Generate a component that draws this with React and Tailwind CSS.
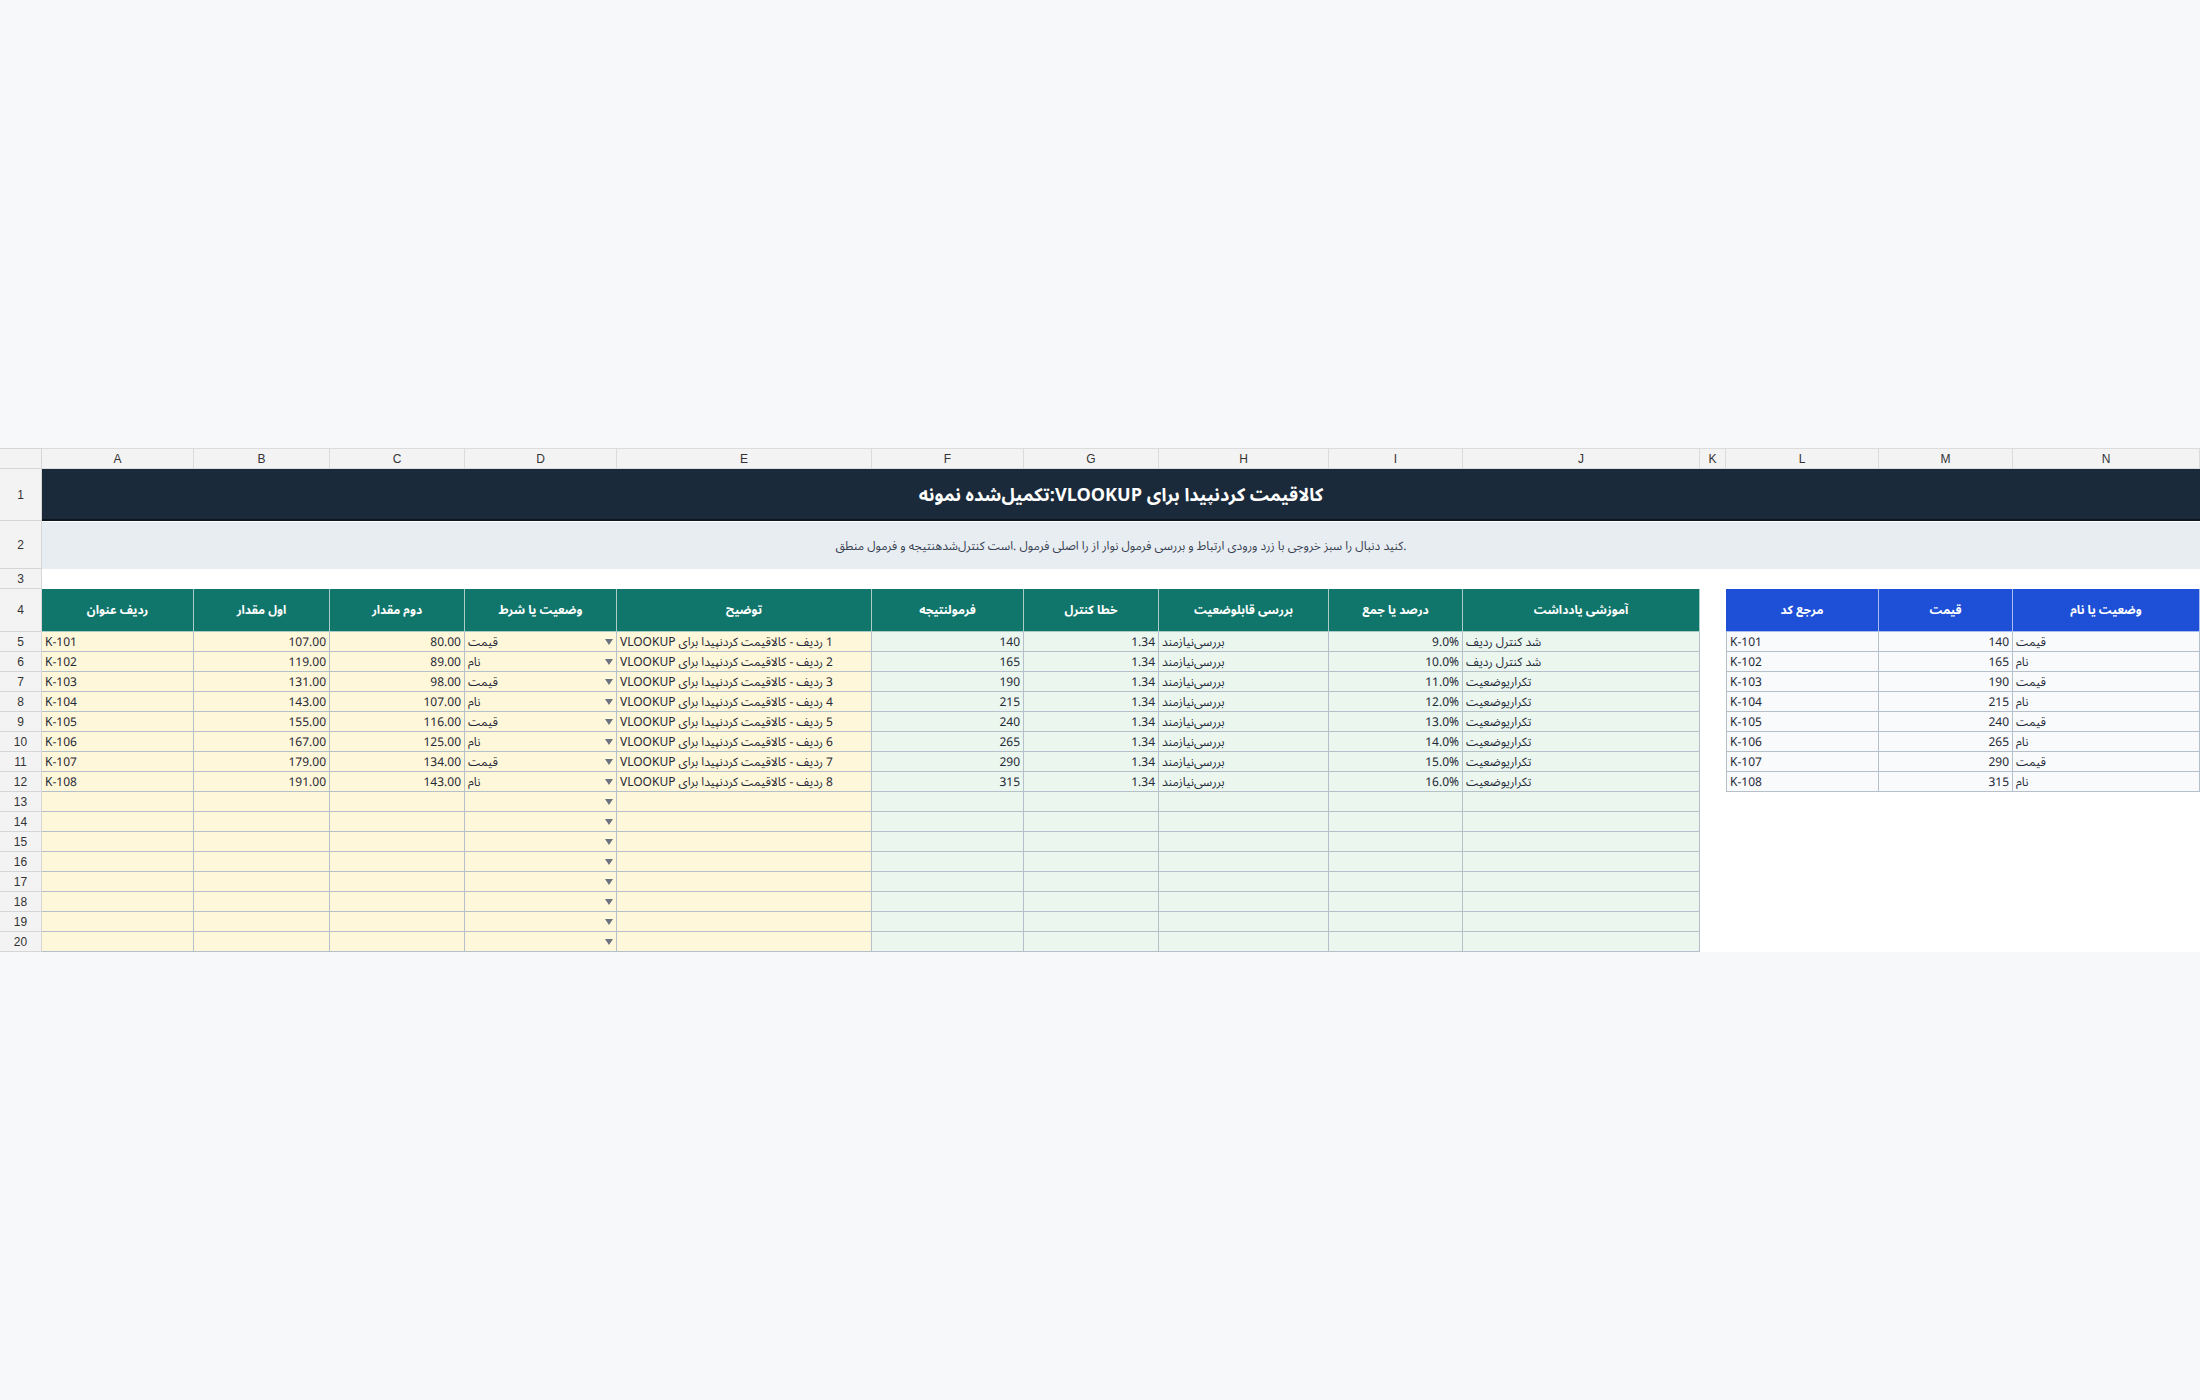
import React from "react";

const GRID =
  "grid grid-cols-[42px_152px_136px_135px_152px_255px_152px_135px_170px_134px_237px_26px_153px_134px_187px]";

const FONT = {
  fontFamily:
    '"Noto Sans Arabic UI", "Noto Sans Arabic", "Noto Naskh Arabic UI", "DejaVu Sans Condensed", "DejaVu Sans", sans-serif',
};
const ARIAL = { fontFamily: '"Liberation Sans", Arial, sans-serif' };

const letters = ["A", "B", "C", "D", "E", "F", "G", "H", "I", "J", "K", "L", "M", "N"];

const rows = [
  { a: "K-101", b: "107.00", c: "80.00", d: "قیمت", f: "140", i: "9.0%", j: "شد کنترل ردیف" },
  { a: "K-102", b: "119.00", c: "89.00", d: "نام", f: "165", i: "10.0%", j: "شد کنترل ردیف" },
  { a: "K-103", b: "131.00", c: "98.00", d: "قیمت", f: "190", i: "11.0%", j: "تکراریوضعیت" },
  { a: "K-104", b: "143.00", c: "107.00", d: "نام", f: "215", i: "12.0%", j: "تکراریوضعیت" },
  { a: "K-105", b: "155.00", c: "116.00", d: "قیمت", f: "240", i: "13.0%", j: "تکراریوضعیت" },
  { a: "K-106", b: "167.00", c: "125.00", d: "نام", f: "265", i: "14.0%", j: "تکراریوضعیت" },
  { a: "K-107", b: "179.00", c: "134.00", d: "قیمت", f: "290", i: "15.0%", j: "تکراریوضعیت" },
  { a: "K-108", b: "191.00", c: "143.00", d: "نام", f: "315", i: "16.0%", j: "تکراریوضعیت" },
];

function RowNum({ n, className = "" }) {
  return (
    <div
      style={ARIAL}
      className={`flex items-center justify-center bg-[#f3f3f3] border-r border-b border-[#d6d6d6] text-[12px] text-[#333] ${className}`}
    >
      {n}
    </div>
  );
}

function Arrow() {
  return (
    <svg width="8" height="6" viewBox="0 0 8 6" className="shrink-0">
      <polygon points="0,0 8,0 4,6" fill="#6b7280" />
    </svg>
  );
}

const Y = "bg-[#fff7d9] border-r border-b border-[#b6c0ca]";
const G = "bg-[#eaf6ee] border-r border-b border-[#b6c0ca]";
const Lk = "bg-[#f8fafc] border-r border-b border-[#b6c0ca]";

function Cell({ cls, children, align = "left", rtl = false }) {
  const j = align === "right" ? "justify-end" : "justify-start";
  return (
    <div className={`flex items-center ${j} px-[3px] overflow-hidden whitespace-nowrap text-[12px] text-[#1f2937] ${cls}`}>
      {rtl ? <span dir="rtl" className="text-left">{children}</span> : children}
    </div>
  );
}

function DCell({ children }) {
  return (
    <div className={`flex items-center justify-between pl-[3px] pr-[3px] overflow-hidden whitespace-nowrap text-[12px] text-[#1f2937] ${Y}`}>
      <span dir="rtl">{children}</span>
      <Arrow />
    </div>
  );
}

function Head({ children, blue = false }) {
  return (
    <div
      dir="rtl"
      className={`flex items-center justify-center text-[12px] font-bold text-white border-r border-b ${
        blue ? "bg-[#1d4fd7] border-[#a9bdf0]" : "bg-[#10766b] border-[#a9cdc6]"
      }`}
    >
      {children}
    </div>
  );
}

export default function App() {
  return (
    <div className="min-h-screen w-full bg-[#f6f8fa] flex items-center" style={FONT}>
      <div className="w-[2200px] bg-white">
        <div className={`${GRID} h-[21px]`}>
          <div className="bg-[#f3f3f3] border-r border-b border-t border-[#d6d6d6]" />
          {letters.map((l) => (
            <div
              key={l}
              style={ARIAL}
              className="flex items-center justify-center bg-[#f3f3f3] border-r border-b border-t border-[#dcdcdc] text-[12px] text-[#333]"
            >
              {l}
            </div>
          ))}
        </div>

        <div className={`${GRID} h-[52px]`}>
          <RowNum n="1" />
          <div
            dir="rtl"
            className="col-span-14 flex items-center justify-center bg-[#1a2a3a] border-b-2 border-[#0b1620] text-[18px] font-bold text-white"
          >
            کالاقیمت کردنپیدا برای VLOOKUP:تکمیل‌شده نمونه
          </div>
        </div>

        <div className={`${GRID} h-[48px]`}>
          <RowNum n="2" />
          <div
            dir="rtl"
            className="col-span-14 flex items-center justify-center bg-[#e8edf2] border-t border-white text-[12px] text-[#374151]"
          >
            .کنید دنبال را سبز خروجی با زرد ورودی ارتباط و بررسی فرمول نوار از را اصلی فرمول .است کنترل‌شدهنتیجه و فرمول منطق
          </div>
        </div>

        <div className={`${GRID} h-[20px]`}>
          <RowNum n="3" />
          <div className="col-span-14 bg-white" />
        </div>

        <div className={`${GRID} h-[43px]`}>
          <RowNum n="4" />
          <Head>ردیف عنوان</Head>
          <Head>اول مقدار</Head>
          <Head>دوم مقدار</Head>
          <Head>وضعیت یا شرط</Head>
          <Head>توضیح</Head>
          <Head>فرمولنتیجه</Head>
          <Head>خطا کنترل</Head>
          <Head>بررسی قابلوضعیت</Head>
          <Head>درصد یا جمع</Head>
          <Head>آموزشی یادداشت</Head>
          <div className="bg-white" />
          <Head blue>مرجع کد</Head>
          <Head blue>قیمت</Head>
          <Head blue>وضعیت یا نام</Head>
        </div>

        {rows.map((r, i) => (
          <div key={r.a} className={`${GRID} h-[20px]`}>
            <RowNum n={i + 5} />
            <Cell cls={Y}>{r.a}</Cell>
            <Cell cls={Y} align="right">{r.b}</Cell>
            <Cell cls={Y} align="right">{r.c}</Cell>
            <DCell>{r.d}</DCell>
            <Cell cls={Y} rtl>{`${i + 1} ردیف - کالاقیمت کردنپیدا برای VLOOKUP`}</Cell>
            <Cell cls={G} align="right">{r.f}</Cell>
            <Cell cls={G} align="right">1.34</Cell>
            <Cell cls={G} rtl>بررسی‌نیازمند</Cell>
            <Cell cls={G} align="right">{r.i}</Cell>
            <Cell cls={G} rtl>{r.j}</Cell>
            <div className="bg-white" />
            <Cell cls={`${Lk} border-l`}>{r.a}</Cell>
            <Cell cls={Lk} align="right">{r.f}</Cell>
            <Cell cls={Lk} rtl>{r.d}</Cell>
          </div>
        ))}

        {Array.from({ length: 8 }).map((_, i) => (
          <div key={i} className={`${GRID} h-[20px]`}>
            <RowNum n={i + 13} />
            <div className={Y} />
            <div className={Y} />
            <div className={Y} />
            <div className={`flex items-center justify-end pr-[3px] ${Y}`}>
              <Arrow />
            </div>
            <div className={Y} />
            <div className={G} />
            <div className={G} />
            <div className={G} />
            <div className={G} />
            <div className={G} />
            <div className="bg-white" />
            <div className="bg-white" />
            <div className="bg-white" />
            <div className="bg-white" />
          </div>
        ))}
      </div>
    </div>
  );
}
